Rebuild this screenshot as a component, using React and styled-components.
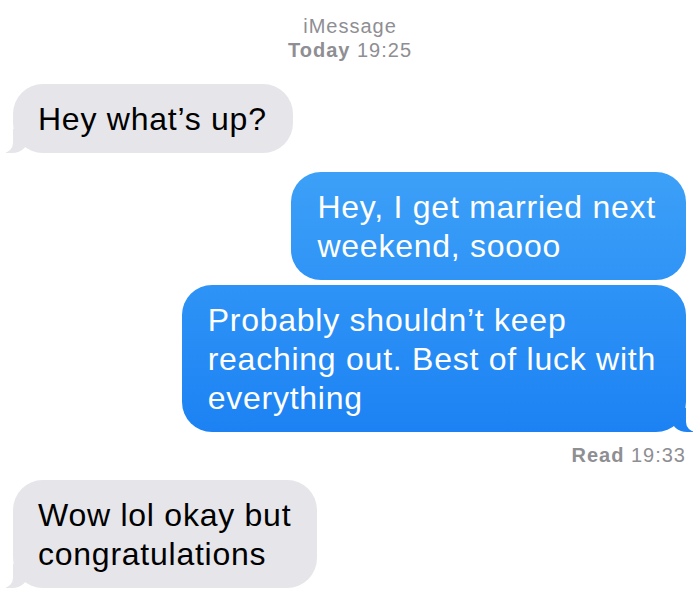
import styled, { createGlobalStyle } from "styled-components";

const GlobalStyle = createGlobalStyle`
  body {
    margin: 0;
    background: #fff;
    font-family: "Liberation Sans", Arial, sans-serif;
  }
`;

const Thread = styled.div`
  display: flex;
  flex-direction: column;
  width: 700px;
  height: 608px;
  overflow: hidden;
`;

const Header = styled.div`
  padding-top: 14px;
  text-align: center;
  color: #8e8e93;
  font-size: 20px;
  line-height: 24px;
  letter-spacing: 1px;
  margin-bottom: 22px;
  b {
    font-weight: 700;
  }
`;

const Bubble = styled.div`
  position: relative;
  align-self: ${(p) => (p.sent ? "flex-end" : "flex-start")};
  margin: ${(p) => (p.sent ? "0 14px 0 0" : "0 0 0 13px")};
  padding: ${(p) => (p.sent ? "16px 30px 14px 26px" : "16px 26px 14px 25px")};
  border-radius: 30px;
  font-size: 32px;
  line-height: 39px;
  letter-spacing: 0.75px;
  white-space: nowrap;
  color: ${(p) => (p.sent ? "#fff" : "#000")};
  background: ${(p) =>
    p.sent
      ? "linear-gradient(180deg, #3fa3f8 150px, #1a80f3 450px) fixed"
      : "#e5e5ea"};

  ${(p) =>
    p.tail &&
    `
    &::before {
      content: "";
      position: absolute;
      bottom: 0;
      ${p.sent ? "right: -7px;" : "left: -7px;"}
      width: 22px;
      height: 24px;
      background: inherit;
      ${p.sent ? "border-bottom-left-radius: 16px 14px;" : "border-bottom-right-radius: 16px 14px;"}
    }
    &::after {
      content: "";
      position: absolute;
      bottom: 0;
      ${p.sent ? "right: -11px;" : "left: -11px;"}
      width: 11px;
      height: 24px;
      background: #fff;
      ${p.sent ? "border-bottom-left-radius: 10px;" : "border-bottom-right-radius: 10px;"}
    }
  `}
`;

const Receipt = styled.div`
  align-self: flex-end;
  margin: 11px 14px 13px 0;
  color: #8e8e93;
  font-size: 20px;
  line-height: 24px;
  letter-spacing: 1px;
  b {
    font-weight: 700;
  }
`;

const App = () => {
  return (
    <>
      <GlobalStyle />
      <Thread>
        <Header>
          iMessage
          <br />
          <b>Today</b> 19:25
        </Header>
        <Bubble tail>Hey what’s up?</Bubble>
        <Bubble sent style={{ marginTop: 19 }}>
          Hey, I get married next
          <br />
          weekend, soooo
        </Bubble>
        <Bubble sent tail style={{ marginTop: 5 }}>
          Probably shouldn’t keep
          <br />
          reaching out. Best of luck with
          <br />
          everything
        </Bubble>
        <Receipt>
          <b>Read</b> 19:33
        </Receipt>
        <Bubble tail>
          Wow lol okay but
          <br />
          congratulations
        </Bubble>
      </Thread>
    </>
  );
};

export default App;
